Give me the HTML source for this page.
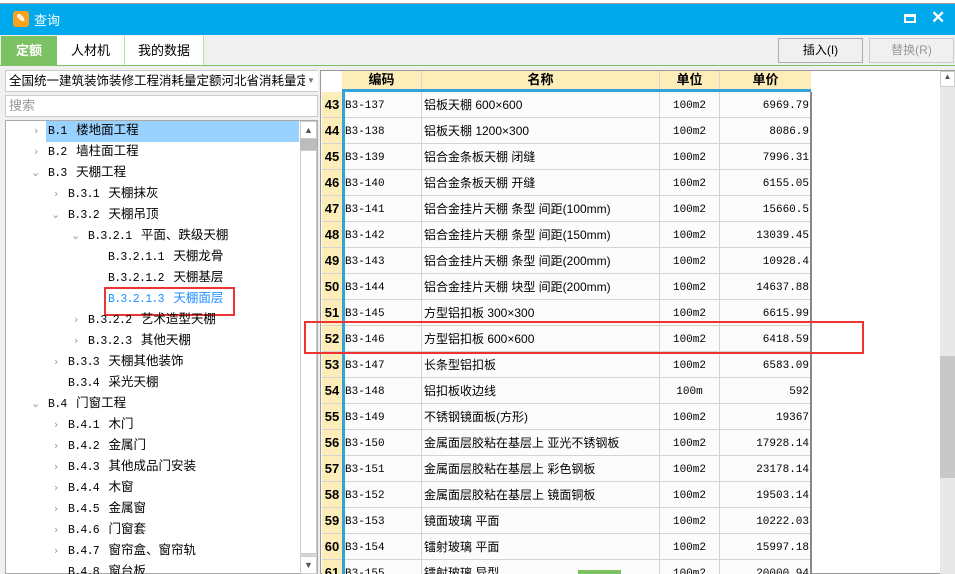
<!DOCTYPE html>
<html><head><meta charset="utf-8"><style>
*{margin:0;padding:0;box-sizing:border-box}
html,body{width:955px;height:574px;overflow:hidden}
body{background:#f0f0f0;font-family:"Liberation Sans","Noto Sans CJK SC",sans-serif;font-size:12px;color:#000;position:relative}
.a{position:absolute}
.tr{position:absolute;height:21px;line-height:21px;font-size:12.5px;white-space:nowrap;font-family:"Liberation Mono","Noto Sans CJK SC",monospace}
.tr b{font-weight:normal;font-size:11.5px;letter-spacing:-0.7px;margin-right:2px}
.ar{position:absolute;font-size:11px;color:#999;font-family:"DejaVu Sans",sans-serif}
.row{position:absolute;left:322px;width:489px;height:26px;background:#fcfcfc;border-bottom:1px solid #d4d4d4}
.row div{position:absolute;top:0;height:25px;display:flex;align-items:center;white-space:nowrap}
.n{left:0;width:20px;background:#fdedb8;font-weight:bold;font-size:13px;justify-content:center}
.c{left:22px;width:78px;font-family:"Liberation Mono",monospace;font-size:11px;border-right:1px solid #d4d4d4;padding-left:1px;padding-top:3px}
.m{left:100px;width:238px;border-right:1px solid #d4d4d4;padding-left:2px}
.u{left:338px;width:60px;border-right:1px solid #d4d4d4;justify-content:center;font-family:"Liberation Mono",monospace;font-size:11px;padding-top:3px}
.p{left:398px;width:91px;justify-content:flex-end;padding-right:2px;font-family:"Liberation Mono",monospace;font-size:11px;padding-top:3px}
</style></head><body>
<div class="a" style="left:0;top:0;width:955px;height:4px;background:#fff;border-bottom:1px solid #999"></div>
<div class="a" style="left:0;top:4px;width:955px;height:31px;background:#00a8ec"></div>
<div class="a" style="left:13px;top:11px;width:16px;height:16px;background:#f9a21b;border-radius:3px;color:#fff;font-size:11px;text-align:center;line-height:16px;font-weight:bold">✎</div>
<div class="a" style="left:34px;top:10px;color:#fff;font-size:13px">查询</div>
<div class="a" style="left:904px;top:14px;width:12px;height:9px;border:2px solid #fff;border-top-width:3px"></div>
<div class="a" style="left:931px;top:8px;color:#fff;font-size:17px;font-weight:bold">✕</div>
<div class="a" style="left:1px;top:36px;width:56px;height:29px;background:#7cc162;color:#fff;font-weight:bold;font-size:13px;text-align:center;line-height:29px">定额</div>
<div class="a" style="left:57px;top:36px;width:68px;height:29px;background:#fff;border-right:1px solid #b4e3a4;text-align:center;line-height:29px;font-size:13px">人材机</div>
<div class="a" style="left:125px;top:36px;width:79px;height:29px;background:#fff;border-right:1px solid #b4e3a4;text-align:center;line-height:29px;font-size:13px">我的数据</div>
<div class="a" style="left:0;top:65px;width:955px;height:1px;background:#7cc162"></div>
<div class="a" style="left:778px;top:38px;width:85px;height:25px;border:1px solid #adadad;background:#f0f0f0;text-align:center;line-height:23px">插入(I)</div>
<div class="a" style="left:869px;top:38px;width:85px;height:25px;border:1px solid #ccc;background:#f0f0f0;text-align:center;line-height:23px;color:#999">替换(R)</div>
<div class="a" style="left:5px;top:70px;width:313px;height:22px;background:#fff;border:1px solid #ccc;line-height:20px;padding-left:3px;font-size:12.5px;overflow:hidden;white-space:nowrap">全国统一建筑装饰装修工程消耗量定额河北省消耗量定</div>
<div class="a" style="left:305px;top:71px;width:13px;height:20px;background:#fff"></div>
<div class="a" style="left:307px;top:76px;font-size:8px;color:#777">▼</div>
<div class="a" style="left:5px;top:95px;width:313px;height:22px;background:#fff;border:1px solid #ccc;line-height:20px;padding-left:3px;color:#999;font-size:13px">搜索</div>
<div class="a" style="left:5px;top:120px;width:313px;height:454px;background:#fff;border:1px solid #aaa"></div>
<div class="a" style="left:300px;top:121px;width:17px;height:453px;background:#d6d6d6"></div>
<div class="a" style="left:300px;top:121px;width:17px;height:18px;background:#fff;border:1px solid #ccc;font-size:9px;color:#555;text-align:center;line-height:16px">▲</div>
<div class="a" style="left:300px;top:139px;width:17px;height:11px;background:#bcbcbc"></div>
<div class="a" style="left:300px;top:150px;width:17px;height:404px;background:#fff;border:1px solid #ccc"></div>
<div class="a" style="left:300px;top:556px;width:17px;height:18px;background:#fff;border:1px solid #ccc;font-size:9px;color:#555;text-align:center;line-height:16px">▼</div>
<div class="a" style="left:46px;top:121px;width:253px;height:21px;background:#99d1ff"></div>
<div class="tr" style="left:48px;top:121px"><b>B.1</b> 楼地面工程</div><div class="ar" style="left:34px;top:124px">›</div>
<div class="tr" style="left:48px;top:142px"><b>B.2</b> 墙柱面工程</div><div class="ar" style="left:34px;top:145px">›</div>
<div class="tr" style="left:48px;top:163px"><b>B.3</b> 天棚工程</div><div class="ar" style="left:31px;top:166px">⌄</div>
<div class="tr" style="left:68px;top:184px"><b>B.3.1</b> 天棚抹灰</div><div class="ar" style="left:54px;top:187px">›</div>
<div class="tr" style="left:68px;top:205px"><b>B.3.2</b> 天棚吊顶</div><div class="ar" style="left:51px;top:208px">⌄</div>
<div class="tr" style="left:88px;top:226px"><b>B.3.2.1</b> 平面、跌级天棚</div><div class="ar" style="left:71px;top:229px">⌄</div>
<div class="tr" style="left:108px;top:247px"><b>B.3.2.1.1</b> 天棚龙骨</div>
<div class="tr" style="left:108px;top:268px"><b>B.3.2.1.2</b> 天棚基层</div>
<div class="tr" style="left:108px;top:289px;color:#1e90ff"><b>B.3.2.1.3</b> 天棚面层</div>
<div class="a" style="left:104px;top:287px;width:131px;height:29px;border:2px solid #ee3333"></div>
<div class="tr" style="left:88px;top:310px"><b>B.3.2.2</b> 艺术造型天棚</div><div class="ar" style="left:74px;top:313px">›</div>
<div class="tr" style="left:88px;top:331px"><b>B.3.2.3</b> 其他天棚</div><div class="ar" style="left:74px;top:334px">›</div>
<div class="tr" style="left:68px;top:352px"><b>B.3.3</b> 天棚其他装饰</div><div class="ar" style="left:54px;top:355px">›</div>
<div class="tr" style="left:68px;top:373px"><b>B.3.4</b> 采光天棚</div>
<div class="tr" style="left:48px;top:394px"><b>B.4</b> 门窗工程</div><div class="ar" style="left:31px;top:397px">⌄</div>
<div class="tr" style="left:68px;top:415px"><b>B.4.1</b> 木门</div><div class="ar" style="left:54px;top:418px">›</div>
<div class="tr" style="left:68px;top:436px"><b>B.4.2</b> 金属门</div><div class="ar" style="left:54px;top:439px">›</div>
<div class="tr" style="left:68px;top:457px"><b>B.4.3</b> 其他成品门安装</div><div class="ar" style="left:54px;top:460px">›</div>
<div class="tr" style="left:68px;top:478px"><b>B.4.4</b> 木窗</div><div class="ar" style="left:54px;top:481px">›</div>
<div class="tr" style="left:68px;top:499px"><b>B.4.5</b> 金属窗</div><div class="ar" style="left:54px;top:502px">›</div>
<div class="tr" style="left:68px;top:520px"><b>B.4.6</b> 门窗套</div><div class="ar" style="left:54px;top:523px">›</div>
<div class="tr" style="left:68px;top:541px"><b>B.4.7</b> 窗帘盒、窗帘轨</div><div class="ar" style="left:54px;top:544px">›</div>
<div class="tr" style="left:68px;top:562px"><b>B.4.8</b> 窗台板</div>
<div class="a" style="left:320px;top:70px;width:635px;height:504px;background:#fff;border:1px solid #999;border-right:none"></div>
<div class="a" style="left:342px;top:71px;width:469px;height:21px;background:#fdedb8;border-bottom:3px solid #35a3d8;font-weight:bold;font-size:13px;line-height:18px">
<span class="a" style="left:0;width:80px;text-align:center;border-right:1px solid #d4d4d4;height:18px">编码</span>
<span class="a" style="left:80px;width:238px;text-align:center;border-right:1px solid #d4d4d4;height:18px">名称</span>
<span class="a" style="left:318px;width:60px;text-align:center;border-right:1px solid #d4d4d4;height:18px">单位</span>
<span class="a" style="left:378px;width:91px;text-align:center">单价</span></div>
<div id="g"></div>
<div class="a" style="left:342px;top:92px;width:3px;height:482px;background:#35a3d8"></div>
<div class="a" style="left:810px;top:92px;width:2px;height:482px;background:#888"></div>
<div class="a" style="left:940px;top:71px;width:15px;height:503px;background:#e8e8e8"></div>
<div class="a" style="left:940px;top:71px;width:15px;height:16px;background:#fff;border:1px solid #ccc;font-size:8px;text-align:center;color:#555">▲</div>
<div class="a" style="left:940px;top:356px;width:15px;height:122px;background:#c8c8c8"></div>
<div class="a" style="left:304px;top:321px;width:560px;height:33px;border:2px solid #ee3333"></div>
<div class="a" style="left:578px;top:570px;width:43px;height:4px;background:#7cc162"></div>
<script>
var d=[["43","B3-137","铝板天棚 600×600","100m2","6969.79"],["44","B3-138","铝板天棚 1200×300","100m2","8086.9"],["45","B3-139","铝合金条板天棚 闭缝","100m2","7996.31"],["46","B3-140","铝合金条板天棚 开缝","100m2","6155.05"],["47","B3-141","铝合金挂片天棚 条型 间距(100mm)","100m2","15660.5"],["48","B3-142","铝合金挂片天棚 条型 间距(150mm)","100m2","13039.45"],["49","B3-143","铝合金挂片天棚 条型 间距(200mm)","100m2","10928.4"],["50","B3-144","铝合金挂片天棚 块型 间距(200mm)","100m2","14637.88"],["51","B3-145","方型铝扣板 300×300","100m2","6615.99"],["52","B3-146","方型铝扣板 600×600","100m2","6418.59"],["53","B3-147","长条型铝扣板","100m2","6583.09"],["54","B3-148","铝扣板收边线","100m","592"],["55","B3-149","不锈钢镜面板(方形)","100m2","19367"],["56","B3-150","金属面层胶粘在基层上 亚光不锈钢板","100m2","17928.14"],["57","B3-151","金属面层胶粘在基层上 彩色钢板","100m2","23178.14"],["58","B3-152","金属面层胶粘在基层上 镜面铜板","100m2","19503.14"],["59","B3-153","镜面玻璃 平面","100m2","10222.03"],["60","B3-154","镭射玻璃 平面","100m2","15997.18"],["61","B3-155","镭射玻璃 异型","100m2","20000.94"]];
var h="";d.forEach(function(r,i){h+='<div class="row" style="top:'+(92+i*26)+'px"><div class="n">'+r[0]+'</div><div class="c">'+r[1]+'</div><div class="m">'+r[2]+'</div><div class="u">'+r[3]+'</div><div class="p">'+r[4]+'</div></div>'});document.getElementById("g").innerHTML=h;
</script>
</body></html>
